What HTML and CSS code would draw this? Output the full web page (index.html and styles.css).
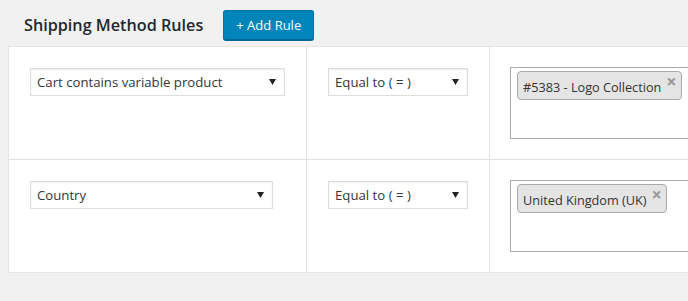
FILE: index.html
```html
<!DOCTYPE html>
<html>
<head>
<meta charset="utf-8">
<link rel="stylesheet" href="styles.css">
</head>
<body>
<div class="page">
  <div class="header">
    <h2 class="title">Shipping Method Rules</h2>
    <button class="btn-primary">+ Add Rule</button>
  </div>
  <div class="rules">
    <div class="rule">
      <div class="cell">
        <div class="select select-wide">
          <span class="select-text">Cart contains variable product</span>
          <svg class="arrow" width="7" height="7" viewBox="0 0 7 7"><path d="M0 1 H7 L3.5 7 Z" fill="#222"/></svg>
        </div>
      </div>
      <div class="cell">
        <div class="select select-op">
          <span class="select-text">Equal to ( = )</span>
          <svg class="arrow" width="7" height="7" viewBox="0 0 7 7"><path d="M0 1 H7 L3.5 7 Z" fill="#222"/></svg>
        </div>
      </div>
      <div class="cell cell-last">
        <div class="multi">
          <span class="tag"><span class="tag-text">#5383 - Logo Collection</span><span class="tag-x">×</span></span>
        </div>
      </div>
    </div>
    <div class="rule">
      <div class="cell">
        <div class="select select-country">
          <span class="select-text">Country</span>
          <svg class="arrow" width="7" height="7" viewBox="0 0 7 7"><path d="M0 1 H7 L3.5 7 Z" fill="#222"/></svg>
        </div>
      </div>
      <div class="cell">
        <div class="select select-op">
          <span class="select-text">Equal to ( = )</span>
          <svg class="arrow" width="7" height="7" viewBox="0 0 7 7"><path d="M0 1 H7 L3.5 7 Z" fill="#222"/></svg>
        </div>
      </div>
      <div class="cell cell-last">
        <div class="multi">
          <span class="tag"><span class="tag-text">United Kingdom (UK)</span><span class="tag-x">×</span></span>
        </div>
      </div>
    </div>
  </div>
</div>
</body>
</html>
```

FILE: styles.css
```css
* { box-sizing: border-box; }
html, body {
  margin: 0;
  padding: 0;
  background: #f1f1f1;
  overflow: hidden;
}
body {
  font-family: "Open Sans", "Noto Sans", sans-serif;
  color: #32373c;
}
.page {
  padding-left: 8px;
  width: 1100px;
}
.header {
  display: flex;
  align-items: center;
  gap: 20px;
  padding: 10px 0 6px 16px;
}
.title {
  margin: 0;
  font-size: 16.2px;
  font-weight: 600;
  color: #23282d;
  line-height: 30px;
}
.btn-primary {
  height: 30px;
  width: 91px;
  padding: 0;
  background: #0085ba;
  border: 1px solid #0073aa;
  border-bottom-color: #006799;
  border-radius: 3px;
  box-shadow: 0 1px 0 #006799;
  color: #fff;
  font-family: "Open Sans", "Noto Sans", sans-serif;
  font-size: 13px;
  line-height: 28px;
}
.rules {
  width: 900px;
  background: #fff;
  border: 1px solid #e5e5e5;
}
.rule {
  display: grid;
  grid-template-columns: 298px 183px 1fr;
}
.rule + .rule {
  border-top: 1px solid #e1e1e1;
}
.cell {
  padding: 20px;
  height: 112px;
  border-right: 1px solid #e1e1e1;
}
.cell-last {
  border-right: 0;
}
.select {
  margin: 1px;
  height: 28px;
  display: flex;
  align-items: center;
  justify-content: space-between;
  padding: 0 8px 0 6px;
  background: #fff;
  border: 1px solid #ddd;
  box-shadow: inset 0 1px 2px rgba(0,0,0,.07);
  font-size: 13.2px;
  color: #32373c;
}
.select-wide { width: 255px; }
.select-country { width: 243px; }
.select-op { width: 140px; }
.select-text { white-space: nowrap; }
.arrow { flex: none; margin-top: -1px; }
.multi {
  width: 300px;
  height: 72px;
  border: 1px solid #aaa;
  background: #fff;
  padding: 3px 0 0 6px;
}
.tag {
  display: inline-flex;
  align-items: flex-start;
  height: 29px;
  padding: 0 4px 0 5px;
  background: #e4e4e4;
  border: 1px solid #aaa;
  border-radius: 4px;
  font-size: 12.7px;
  color: #333;
}
.tag-text {
  line-height: 29px;
  padding-top: 1px;
}
.tag-x {
  margin-left: 5px;
  color: #999;
  font-weight: 700;
  font-size: 18px;
  line-height: 18px;
  margin-top: 0;
}
```
